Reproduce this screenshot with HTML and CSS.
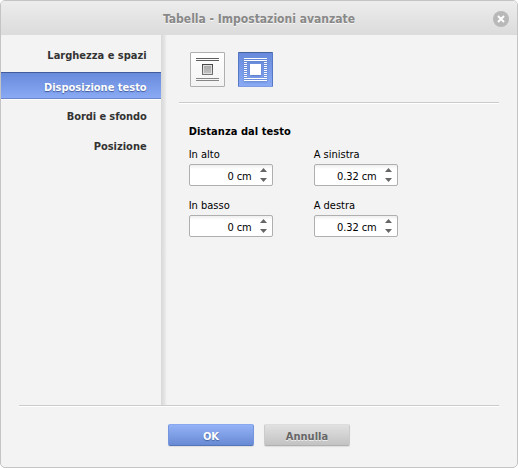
FILE: index.html
```html
<!DOCTYPE html>
<html lang="it">
<head>
<meta charset="utf-8">
<title>Tabella - Impostazioni avanzate</title>
<link rel="stylesheet" href="styles.css">
</head>
<body>
<div class="dialog">
  <header class="header">
    <span class="title">Tabella - Impostazioni avanzate</span>
    <svg class="close" width="16" height="16" viewBox="0 0 16 16"><circle cx="8" cy="8" r="8" fill="#b8b8b8"/><path d="M5 5l6 6M11 5l-6 6" stroke="#fff" stroke-width="2"/></svg>
  </header>
  <div class="body">
    <nav class="menu">
      <div class="item">Larghezza e spazi</div>
      <div class="item active">Disposizione testo</div>
      <div class="item">Bordi e sfondo</div>
      <div class="item">Posizione</div>
    </nav>
    <div class="divider"></div>
    <main class="content">
      <div class="wraps">
        <div class="wrap">
          <svg width="23" height="23" shape-rendering="crispEdges"><path d="M0 .5h23M0 2.5h23" stroke="#5d5d5d"/><path d="M0 20.5h23M0 22.5h23" stroke="#858585"/><defs><linearGradient id="b" x2="0" y2="1"><stop stop-color="#454545"/><stop offset="1" stop-color="#777"/></linearGradient><linearGradient id="g" x2="0" y2="1"><stop stop-color="#aaa"/><stop offset="1" stop-color="#c0c0c0"/></linearGradient></defs><path fill="url(#b)" d="M6 6h11v11H6z"/><path fill="#dedede" d="M7 7h9v9H7z"/><path fill="url(#g)" d="M8 8h7v7H8z"/></svg>
        </div>
        <div class="wrap on">
          <svg width="23" height="23" shape-rendering="crispEdges"><path d="M0 .5h23M0 2.5h23M0 20.5h23M0 22.5h23M0 4.5h3m17 0h3M0 6.5h3m17 0h3M0 8.5h3m17 0h3M0 10.5h3m17 0h3M0 12.5h3m17 0h3M0 14.5h3m17 0h3M0 16.5h3m17 0h3M0 18.5h3m17 0h3" stroke="#fff"/><path fill="#fff" d="M6 6h11v11H6z"/></svg>
        </div>
      </div>
      <div class="rule"></div>
      <h2>Distanza dal testo</h2>
      <div class="fields">
        <label><span>In alto</span><div class="spin"><b>0 cm</b><svg width="7" height="14"><path fill="#666" d="M0 4L3.5 0 7 4zM0 10h7l-3.5 4z"/></svg></div></label>
        <label><span>A sinistra</span><div class="spin"><b>0.32 cm</b><svg width="7" height="14"><path fill="#666" d="M0 4L3.5 0 7 4zM0 10h7l-3.5 4z"/></svg></div></label>
        <label><span>In basso</span><div class="spin"><b>0 cm</b><svg width="7" height="14"><path fill="#666" d="M0 4L3.5 0 7 4zM0 10h7l-3.5 4z"/></svg></div></label>
        <label><span>A destra</span><div class="spin"><b>0.32 cm</b><svg width="7" height="14"><path fill="#666" d="M0 4L3.5 0 7 4zM0 10h7l-3.5 4z"/></svg></div></label>
      </div>
    </main>
  </div>
  <footer class="footer">
    <div class="btn ok">OK</div>
    <div class="btn cancel">Annulla</div>
  </footer>
</div>
</body>
</html>
```
FILE: styles.css
```css
* { box-sizing: border-box; }
body { margin: 0; background: #fff; font: 11px/14px "DejaVu Sans Condensed", "Noto Sans", sans-serif; color: #000; }
.dialog { width: 518px; height: 468px; border: 1px solid #c4c4c4; border-radius: 5px; background: #f3f3f3; overflow: hidden; display: flex; flex-direction: column; }
.header { height: 34px; flex: none; display: flex; align-items: center; padding: 2px 8px 0 162px; background: linear-gradient(#ededed, #dbdbdb); }
.title { flex: 1; font-size: 12px; font-weight: 700; color: #888; white-space: nowrap; text-shadow: 0 1px #f6f6f6; }
.close { flex: none; }
.body { height: 370px; flex: none; display: flex; }
.menu { width: 160px; padding-top: 7px; }
.item { height: 30px; padding: 7px 14px 0 0; text-align: right; font-size: 11px; font-weight: 700; color: #333; white-space: nowrap; }
.active { height: 27px; margin-bottom: 4px; border-top: 1px solid #415b9b; border-bottom: 1px solid #6c86c9; background: linear-gradient(#678adb, #8aaaf4); color: #fff; box-shadow: 0 1px #fff; text-shadow: 0 1px 1px #42599b; padding-top: 8px; }
.active + .item { letter-spacing: -.1px; }
.divider { width: 6px; background: linear-gradient(90deg, #d8d8d8, #e2e2e2 50%, #f3f3f3); }
.content { width: 351px; padding: 17px 18px 0 12px; }
.wraps { display: flex; gap: 13px; padding-left: 11px; }
.wrap { width: 35px; height: 35px; border: 1px solid #afafaf; border-radius: 1px; padding: 5px; background: linear-gradient(#fff, #f3f3f3); }
.wrap svg { display: block; }
.on { border-color: #5779c5; background: linear-gradient(#678adb, #8aaaf4); border-top-color: #46639f; border-bottom-color: #7d9be5; }
.on svg { filter: drop-shadow(0 1px 1px #5576c0); }
.rule { height: 2px; margin-top: 15px; border-top: 1px solid #cbcbcb; background: #fff; }
h2 { margin: 21px 0 9px 10px; font-size: 11px; line-height: 14px; font-weight: 700; letter-spacing: .05px; }
.fields { display: grid; grid-template-columns: 84px 84px; column-gap: 41px; row-gap: 12px; padding-left: 10px; }
label { display: block; height: 39px; }
label > span { display: block; height: 16px; white-space: nowrap; }
.spin { height: 22px; border: 1px solid #afafaf; border-radius: 2px; display: flex; justify-content: flex-end; align-items: center; padding-right: 5px; gap: 8px; background: linear-gradient(#eee, #fff 4px); }
.spin b { font-weight: 400; padding-top: 3px; white-space: nowrap; letter-spacing: -.1px; }
.footer { flex: 1; margin: 0 18px; border-top: 1px solid #cbcbcb; box-shadow: inset 0 1px #fff; display: flex; justify-content: center; gap: 10px; padding-top: 18px; }
.btn { width: 86px; height: 22px; border-radius: 2px; border: 1px solid; font-size: 11px; font-weight: 700; text-align: center; line-height: 23px; box-shadow: 0 1px 1px #ddd; }
.ok { color: #fff; border-color: #89a8ef #7595e0 #5575bb; background: linear-gradient(#94b2f6, #688ad4); text-shadow: 0 1px 1px #45609c; }
.cancel { color: #666; border-color: #ddd #cbcbcb #b1b1b1; background: linear-gradient(#e1e1e1, #c3c3c3); text-shadow: 0 1px #eee; }
```
